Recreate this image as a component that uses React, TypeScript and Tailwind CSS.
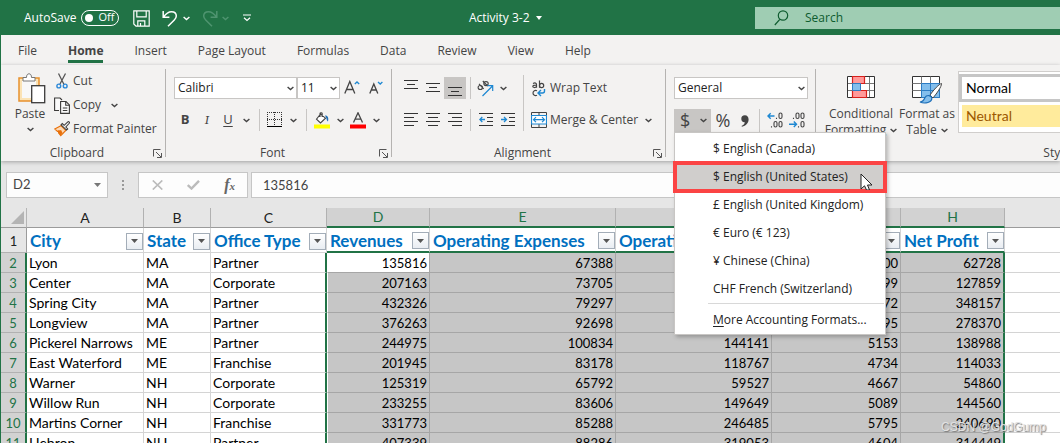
import React, { useState } from 'react';

interface IconProps {
  className?: string;
}

interface Column {
  letter: string;
  title: string;
  width: string;
}

interface Office {
  city: string;
  state: string;
  type: string;
  figures: number[];
}

const tabs = ['File', 'Home', 'Insert', 'Page Layout', 'Formulas', 'Data', 'Review', 'View', 'Help'];

const accountingFormats = [
  '$ English (Canada)',
  '$ English (United States)',
  '£ English (United Kingdom)',
  '€ Euro (€ 123)',
  '¥ Chinese (China)',
  'CHF French (Switzerland)'
];

const columns: Column[] = [
  { letter: 'A', title: 'City', width: 'w-[117px]' },
  { letter: 'B', title: 'State', width: 'w-[67px]' },
  { letter: 'C', title: 'Office Type', width: 'w-[116px]' },
  { letter: 'D', title: 'Revenues', width: 'w-[103px]' },
  { letter: 'E', title: 'Operating Expenses', width: 'w-[186px]' },
  { letter: 'F', title: 'Operating Income', width: 'w-[156px]' },
  { letter: 'G', title: 'Interest', width: 'w-[129px]' },
  { letter: 'H', title: 'Net Profit', width: 'w-[104px]' }
];

const offices: Office[] = [
  { city: 'Lyon', state: 'MA', type: 'Partner', figures: [135816, 67388, 68428, 5700, 62728] },
  { city: 'Center', state: 'MA', type: 'Corporate', figures: [207163, 73705, 133458, 5599, 127859] },
  { city: 'Spring City', state: 'MA', type: 'Partner', figures: [432326, 79297, 353029, 4872, 348157] },
  { city: 'Longview', state: 'MA', type: 'Partner', figures: [376263, 92698, 283565, 5195, 278370] },
  { city: 'Pickerel Narrows', state: 'ME', type: 'Partner', figures: [244975, 100834, 144141, 5153, 138988] },
  { city: 'East Waterford', state: 'ME', type: 'Franchise', figures: [201945, 83178, 118767, 4734, 114033] },
  { city: 'Warner', state: 'NH', type: 'Corporate', figures: [125319, 65792, 59527, 4667, 54860] },
  { city: 'Willow Run', state: 'NH', type: 'Corporate', figures: [233255, 83606, 149649, 5089, 144560] },
  { city: 'Martins Corner', state: 'NH', type: 'Franchise', figures: [331773, 85288, 246485, 5795, 240690] },
  { city: 'Hebron', state: 'NH', type: 'Partner', figures: [407339, 88286, 319053, 4604, 314449] }
];

const Chevron: React.FC<IconProps> = ({ className = '' }) => (
  <svg className={className} width="7" height="5" viewBox="0 0 7 5" fill="none" stroke="currentColor" strokeWidth="1.4">
    <path d="M.6 1l2.9 2.6L6.4 1" />
  </svg>
);

const SaveIcon = () => (
  <svg width="17" height="17" viewBox="0 0 17 17" fill="none" stroke="currentColor" strokeWidth="1.2">
    <path d="M.8.8h15.4v15.4H3L.8 14zM3.8.8v6h9.4v-6M4.8 16.2v-5.4h7v5.4M7.5 13v3" />
  </svg>
);

const UndoIcon: React.FC<IconProps> = ({ className = '' }) => (
  <svg className={className} width="16" height="17" viewBox="0 0 16 17" fill="none" stroke="currentColor" strokeWidth="1.5">
    <path d="M1.2 1v6.2h6.2M1.5 7C4 3.5 6.5 1.7 9.5 1.7c3 0 4.8 1.8 4.8 4.4 0 1.6-.8 2.700-2 3.900L6 16.200" />
  </svg>
);

const PasteIcon = () => (
  <svg className="ml-1" width="28" height="31" viewBox="0 0 28 31" fill="none">
    <rect x="1" y="5" width="20" height="23" fill="#fbe3b5" stroke="#e8912d" strokeWidth="1.5" />
    <rect x="4" y="8" width="14" height="17" fill="#f8f8f8" />
    <path d="M5 8V4.500h3.500C8.500 2 9.500.8 11 .8s2.500 1.200 2.500 3.700H17V8z" fill="#fff" stroke="#777" />
    <rect x="13.700" y="12.700" width="13" height="17" fill="#fff" stroke="#3b3a39" strokeWidth="1.3" />
  </svg>
);

const CutIcon = () => (
  <svg width="16" height="16" viewBox="0 0 16 16" fill="none">
    <path d="M4.500.5l5.500 11M11.500.5L6 11" stroke="#555" strokeWidth="1.3" />
    <circle cx="4.800" cy="13" r="1.900" stroke="#2b88d8" strokeWidth="1.4" />
    <circle cx="11.200" cy="13" r="1.900" stroke="#2b88d8" strokeWidth="1.4" />
  </svg>
);

const CopyIcon = () => (
  <svg width="16" height="17" viewBox="0 0 16 17" fill="none" stroke="#3b3a39" strokeWidth="1.1">
    <path d="M5 13.500H.6V1H6l2 2M6.600 4.500h5.400l3.400 3.400v8.500H6.600z" fill="#fafafa" />
    <path d="M11.700 4.700v3.600h3.500M8.800 11h4.500M8.800 13.500h4.500" />
  </svg>
);

const PainterIcon = () => (
  <svg width="16" height="16" viewBox="0 0 17 16" fill="none">
    <path d="M7.300 4.500L.8 8l2.800 2.500 1.500-.5-.3 2 2.400 3 5.300-5.500z" fill="#fdd9b5" stroke="#e8700a" strokeWidth="1.2" />
    <path d="M3.500 10.500l4-1.500 1.500 3-2 3z" fill="#e8700a" />
    <path d="M7.500 3.500l5.800 5.700 1.300-1.300-2-2 3.600-4c.7-1-.6-2.200-1.500-1.400l-3.900 3.600-2-1.900z" fill="#f5f5f5" stroke="#3b3a39" strokeWidth="1.1" />
  </svg>
);

const LauncherIcon = () => (
  <svg width="9" height="9" viewBox="0 0 9 9" fill="none" stroke="#555">
    <path d="M.5 7.500v-7h7M3 3l5 5M8.500 4v4.500H4" />
  </svg>
);

const BordersIcon = () => (
  <svg width="16" height="16" viewBox="0 0 16 16" fill="none" stroke="#333" shapeRendering="crispEdges">
    <path d="M0 .5h15M0 7.500h15M.5 0v13M7.500 0v13M14.500 0v13" strokeDasharray="1 1" />
    <path d="M0 14.500h15" strokeWidth="1" stroke="#000" />
  </svg>
);

const FillIcon = () => (
  <svg width="16" height="17" viewBox="0 0 16 17" fill="none">
    <path d="M6.500 2L2.500 7.200l4 3.800 5-4.800zM6 5V1.500C6 .6 8.200.6 8.200 1.500V5" fill="#fff" stroke="#444" strokeWidth="1.1" />
    <path d="M11 3.500c2.500 0 4 1.800 3 6-.8-.8-1.500-1.500-1.500-3z" fill="#1e6fb8" />
    <path d="M0 12.500h16v4H0z" fill="#ff0" />
  </svg>
);

const FontColorIcon = () => (
  <svg width="16" height="17" viewBox="0 0 16 17" fill="none">
    <path d="M3.500 10.500L8 .8l4.500 9.700M5 7.200h6" stroke="#444" strokeWidth="1.3" />
    <path d="M0 12.500h16v4H0z" fill="#f00" />
  </svg>
);

// Each line is [start, end] on a 14px wide icon
const LinesIcon: React.FC<{ lines: number[][]; top?: number }> = ({ lines, top = 1 }) => (
  <svg width="14" height="20" viewBox="0 0 14 20" stroke="#333" shapeRendering="crispEdges">
    {lines.map(([from, to], i) => (
      <path key={i} d={`M${from} ${top + i * 4 + 0.5}H${to}`} />
    ))}
  </svg>
);

const IndentIcon: React.FC<{ flip?: boolean }> = ({ flip = false }) => (
  <svg width="14" height="14" viewBox="0 0 14 14" fill="none">
    <path d="M0 .5h14M8 4.500h6M8 8.500h6M0 12.500h14" stroke="#333" shapeRendering="crispEdges" />
    <path d={flip ? 'M0 6.500h5.500M3 4l2.500 2.500L3 9' : 'M6 6.500H.8M3.300 4L.8 6.500 3.300 9'} stroke="#1e88d2" strokeWidth="1.3" />
  </svg>
);

const OrientationIcon = () => (
  <svg width="17" height="17" viewBox="0 0 17 17" fill="none">
    <g stroke="#444" strokeWidth="1.1">
      <ellipse cx="3.300" cy="7.500" rx="2.200" ry="2" />
      <path d="M2 3.800l4.700 5M5.800 1l5 5.200" />
      <ellipse cx="9" cy="3.600" rx="2.200" ry="2" />
    </g>
    <path d="M5.500 16L15.500 6M10.500 5.700h5.200V11" stroke="#1e88d2" strokeWidth="1.2" />
  </svg>
);

const WrapIcon = () => (
  <svg width="16" height="17" viewBox="0 0 16 17" fill="none">
    <g stroke="#444" strokeWidth="1.2">
      <path d="M2 3.500c2-1 3.500-.5 3.500 1v3.300M5.500 5c-2.500 0-3.700.5-3.700 1.600S4.500 8 5.500 6.500M8.500.5v7.300" />
      <circle cx="10.600" cy="5.500" r="2.100" />
      <path d="M6 10.800c-1.800-1-4 0-4 2.200s2.200 3.200 4 2.200" />
    </g>
    <path d="M13.500 9v2c0 1.500-.8 2-2 2H7.500M10 10l-3 3 3 3" stroke="#1e88d2" strokeWidth="1.4" />
  </svg>
);

const MergeIcon = () => (
  <svg width="16" height="16" viewBox="0 0 16 16" fill="none">
    <path d="M.5.5h15v15H.5zM8 .5v3M8 12v3.500" stroke="#444" />
    <path d="M.5 3.500h15v8.500H.5z" fill="#fff" stroke="#1e88d2" strokeWidth="1.2" />
    <path d="M2.500 7.700h11M5 5.200L2.500 7.700 5 10.200M11 5.200l2.500 2.500-2.500 2.500" stroke="#1e88d2" strokeWidth="1.2" />
  </svg>
);

const DecimalIcon: React.FC<{ increase?: boolean }> = ({ increase = false }) => (
  <svg width="17" height="17" viewBox="0 0 17 17" fill="none">
    <g stroke="#444" strokeWidth="1.1">
      <rect x="12" y="1" width="3" height="5.500" rx="1.500" />
      <rect x="12" y="9.500" width="3" height="5.500" rx="1.500" />
      <rect x="7" y={increase ? 9.5 : 1} width="3" height="5.500" rx="1.500" />
      <path d={increase ? 'M4.500 15.500v-1.300M9.500 7V5.700' : 'M4.500 7V5.700M9.500 15.500v-1.300'} />
    </g>
    <path
      d={increase ? 'M7.500 4H1M3.700 1.300L1 4l2.700 2.700' : 'M0 12.300h7.500M4.800 9.600l2.700 2.700L4.800 15'}
      stroke="#1e88d2"
      strokeWidth="1.4"
    />
  </svg>
);

const ConditionalIcon = () => (
  <svg width="28" height="22" viewBox="0 0 28 22" fill="none">
    <path d="M.5.5h27v21H.5z" fill="#fff" />
    <path d="M.5 7.500h27M.5 14.500h27M5.500.5v21M17.500.5v21M22.500.5v21" stroke="#777" />
    <path d="M.5.5h27v21H.5z" stroke="#333" />
    <path d="M5.500.5h12v7h-12z" fill="#ff9a9a" stroke="#d8201c" strokeWidth="1.2" />
    <path d="M5.500 14.500h14v7h-14z" fill="#ff9a9a" stroke="#d8201c" strokeWidth="1.2" />
    <path d="M5.500 7.500h8v7h-8z" fill="#83beec" stroke="#2b7cc4" />
    <path d="M14 8h8v6h-8z" fill="#fff" />
  </svg>
);

const FormatTableIcon = () => (
  <svg width="31" height="28" viewBox="0 0 31 28" fill="none">
    <path d="M.5.5h27v21H.5z" fill="#fff" stroke="#333" />
    <path d="M9.500 7.500h18v14h-18z" fill="#83beec" />
    <path d="M.5 7.500h9M.5 14.500h9M9.500.5v7M18.500.5v7" stroke="#777" />
    <path d="M9.500 7.500h18v14h-18zM9.500 14.500h18M18.500 7.500v14" stroke="#2b7cc4" />
    <path d="M29.500 7.500c-2.500.5-7.500 6-11.500 11.500l3 3c4-5 8.500-11 8.500-14.500z" fill="#fff" stroke="#444" />
    <path d="M8 26c3 0 4-2 5-4.500 1.500-3 6.500-2.500 6.800.8.2 4-6.800 6-11.800 3.700z" fill="#83beec" stroke="#1e6fb8" strokeWidth="1.2" />
  </svg>
);

const FilterButton: React.FC<{ column: string }> = ({ column }) => (
  <button
    type="button"
    aria-label={`Filter ${column}`}
    className="flex h-[17px] w-[17px] flex-none items-center justify-center border border-[#a3adb8] bg-gradient-to-b from-white to-[#e9edf2]"
  >
    <svg width="7" height="4" viewBox="0 0 7 4" fill="#555">
      <path d="M0 0h7L3.500 4z" />
    </svg>
  </button>
);

const Separator: React.FC<IconProps> = ({ className = 'bg-[#c8c6c4]' }) => (
  <div className={`w-px flex-none self-stretch ${className}`} />
);

const ToolButton: React.FC<{ label: string; className?: string; children: React.ReactNode }> = ({
  label,
  className = 'w-5',
  children
}) => (
  <button type="button" aria-label={label} className={`flex h-[22px] flex-none items-center justify-center ${className}`}>
    {children}
  </button>
);

const RibbonSelect: React.FC<{ label: string; value: string; className: string }> = ({ label, value, className }) => (
  <div className={`relative h-[22px] flex-none ${className}`}>
    <select
      aria-label={label}
      defaultValue={value}
      className="h-full w-full appearance-none border border-[#c8c6c4] bg-white pl-[3px] text-[12px] text-[#222]"
    >
      <option>{value}</option>
    </select>
    <Chevron className="pointer-events-none absolute top-[9px] right-[3px]" />
  </div>
);

interface RibbonGroupProps {
  title: string;
  className: string;
  launcher?: boolean;
  children: React.ReactNode;
}

const RibbonGroup: React.FC<RibbonGroupProps> = ({ title, className, launcher = true, children }) => (
  <section className={`flex flex-none flex-col ${className}`}>
    <div className="h-20 flex-none">{children}</div>
    <div className="flex h-4 items-center pr-[3px]">
      <span className="flex-1 text-center">{title}</span>
      {launcher && (
        <button type="button" aria-label={`${title} settings`}>
          <LauncherIcon />
        </button>
      )}
    </div>
  </section>
);

const TitleBar = () => {
  const [autoSave, setAutoSave] = useState(false);

  return (
    <header className="flex h-[35px] flex-none items-center bg-[#217346] pl-[23px] text-white">
      <span>AutoSave</span>
      <button
        type="button"
        role="switch"
        aria-checked={autoSave}
        aria-label="AutoSave"
        onClick={() => setAutoSave(!autoSave)}
        className="ml-[5px] flex h-4 w-[38px] flex-none items-center justify-between rounded-full border border-white pr-1 pl-[3px] text-[11px]"
      >
        <span className="h-2 w-2 rounded-full bg-white" />
        {autoSave ? 'On' : 'Off'}
      </button>
      <div className="flex flex-none items-center pt-px pl-[14px]">
        <button type="button" aria-label="Save"><SaveIcon /></button>
        <button type="button" aria-label="Undo" className="ml-3"><UndoIcon /></button>
        <button type="button" aria-label="Undo history" className="ml-[5px]"><Chevron /></button>
        <button type="button" aria-label="Redo" className="ml-3 text-[#4f9470]"><UndoIcon className="-scale-x-100" /></button>
        <button type="button" aria-label="Redo history" className="ml-1 text-[#4f9470]"><Chevron /></button>
        <button type="button" aria-label="Customize toolbar" className="ml-[14px]">
          <svg width="8" height="8" viewBox="0 0 8 8" fill="none" stroke="currentColor" strokeWidth="1.2">
            <path d="M0 1h8M1 3.800l3 2.700 3-2.700" />
          </svg>
        </button>
      </div>
      <div className="flex flex-1 justify-center pl-1">
        <button type="button" className="flex items-center gap-[6px] whitespace-nowrap">
          Activity 3-2
          <svg width="6" height="4" viewBox="0 0 6 4" fill="currentColor"><path d="M0 0h6L3 4z" /></svg>
        </button>
      </div>
      <label className="mt-[7px] flex h-[22px] w-[305px] flex-none items-center self-start bg-[#9fcdb3] pl-[19px] text-[#0e5c2f]">
        <svg width="15" height="16" viewBox="0 0 15 16" fill="none" stroke="currentColor" strokeWidth="1.2">
          <circle cx="9" cy="5.500" r="4.700" />
          <path d="M5.800 9.300L.8 15" />
        </svg>
        <input
          type="text"
          aria-label="Search"
          placeholder="Search"
          className="ml-4 min-w-0 flex-1 bg-transparent text-[12px] outline-none placeholder:text-[#0e5c2f]"
        />
      </label>
    </header>
  );
};

const AccountingMenu = () => {
  const [active, setActive] = useState('$ English (United States)');

  return (
    <div
      role="menu"
      className="absolute top-[23px] left-0 z-20 h-[203px] w-[212px] border border-[#c8c6c4] bg-white pt-[2px] text-[12px] text-[#222] shadow-[2px_2px_4px_rgba(0,0,0,0.25)]"
    >
      {accountingFormats.map(format => (
        <button
          key={format}
          type="button"
          role="menuitem"
          onClick={() => setActive(format)}
          className={`flex h-7 w-full items-center pl-[38px] whitespace-nowrap ${
            format === active ? 'relative z-10 bg-[#d0cecc] outline-4 -outline-offset-2 outline-[#fb4444]' : ''
          }`}
        >
          {format}
          {format === active && (
            <svg className="absolute top-[10px] right-3" width="13" height="17" viewBox="0 0 13 17">
              <path d="M1 1v15l3.500-3.200L6.500 17h3l-2-5H12z" fill="#fff" stroke="#222" />
            </svg>
          )}
        </button>
      ))}
      <div className="mr-px ml-[33px] border-t border-[#d8d8d8]" />
      <button type="button" role="menuitem" className="flex h-[31px] w-full items-center pl-[38px] whitespace-nowrap">
        <span className="underline underline-offset-2">M</span>ore Accounting Formats...
      </button>
    </div>
  );
};

const Ribbon = () => (
  <div className="relative z-10 flex h-24 flex-none bg-[#f3f2f1] text-[#444] shadow-[0_1px_4px_rgba(0,0,0,0.3)]">
    <RibbonGroup title="Clipboard" className="w-[164px]">
      <div className="flex pt-1">
        <button type="button" className="flex w-[53px] flex-none flex-col items-center pt-1 pl-[5px]">
          <PasteIcon />
          <span className="mt-[2px] leading-4">Paste</span>
          <Chevron className="mt-[5px]" />
        </button>
        <div className="flex flex-col items-start">
          <button type="button" className="flex h-6 items-center gap-[3px]"><CutIcon />Cut</button>
          <div className="flex h-6 items-center">
            <button type="button" className="flex items-center gap-[3px]"><CopyIcon />Copy</button>
            <button type="button" aria-label="Copy options" className="ml-[10px]"><Chevron /></button>
          </div>
          <button type="button" className="flex h-6 items-center gap-[3px] whitespace-nowrap"><PainterIcon />Format Painter</button>
        </div>
      </div>
    </RibbonGroup>
    <Separator className="my-1 bg-[#b5b3b1]" />

    <RibbonGroup title="Font" className="w-[225px]">
      <div className="flex flex-col gap-[10px] pt-3 pl-2">
        <div className="flex items-center">
          <RibbonSelect label="Font name" value="Calibri" className="w-[123px]" />
          <RibbonSelect label="Font size" value="11" className="w-[43px]" />
          <ToolButton label="Increase font size" className="w-6">
            <svg width="16" height="16" viewBox="0 0 16 16" fill="none">
              <path d="M.8 13.500L5.800 1.500l5 12M2.400 9.500h6.800" stroke="#444" strokeWidth="1.3" />
              <path d="M10.800 4l2.200-2 2.200 2" stroke="#1e88d2" strokeWidth="1.3" />
            </svg>
          </ToolButton>
          <ToolButton label="Decrease font size" className="w-6">
            <svg width="14" height="16" viewBox="0 0 14 16" fill="none">
              <path d="M.8 13.500l4-9.500 4 9.500M2.200 10h5.200" stroke="#444" strokeWidth="1.3" />
              <path d="M9 2l2.200 2 2.200-2" stroke="#1e88d2" strokeWidth="1.3" />
            </svg>
          </ToolButton>
        </div>
        <div className="flex items-center text-[13px]">
          <ToolButton label="Bold" className="w-[22px] font-bold">B</ToolButton>
          <ToolButton label="Italic" className="w-[22px] font-serif italic">I</ToolButton>
          <ToolButton label="Underline" className="w-5 underline underline-offset-2">U</ToolButton>
          <ToolButton label="Underline options" className="w-4"><Chevron /></ToolButton>
          <Separator className="mx-[5px] bg-[#c8c6c4]" />
          <ToolButton label="Borders"><BordersIcon /></ToolButton>
          <ToolButton label="Border options" className="w-4"><Chevron /></ToolButton>
          <Separator className="mx-[5px] bg-[#c8c6c4]" />
          <ToolButton label="Fill color"><FillIcon /></ToolButton>
          <ToolButton label="Fill color options" className="w-4"><Chevron /></ToolButton>
          <ToolButton label="Font color"><FontColorIcon /></ToolButton>
          <ToolButton label="Font color options" className="w-4"><Chevron /></ToolButton>
        </div>
      </div>
    </RibbonGroup>
    <Separator className="my-1 bg-[#b5b3b1]" />

    <RibbonGroup title="Alignment" className="w-[273px]">
      <div className="flex pt-[10px] pl-2">
        <div className="flex flex-none flex-col gap-[10px] pt-[2px]">
          <div className="flex items-center">
            <ToolButton label="Top align" className="w-[22px]"><LinesIcon top={2} lines={[[0, 14], [3, 11], [0, 14]]} /></ToolButton>
            <ToolButton label="Middle align" className="w-[22px]"><LinesIcon top={5} lines={[[0, 14], [3, 11], [0, 14]]} /></ToolButton>
            <ToolButton label="Bottom align" className="w-[22px] bg-[#c8c6c4]"><LinesIcon top={9} lines={[[0, 14], [3, 11], [0, 14]]} /></ToolButton>
            <Separator className="mx-1 bg-[#c8c6c4]" />
            <ToolButton label="Orientation"><OrientationIcon /></ToolButton>
            <ToolButton label="Orientation options" className="w-4"><Chevron /></ToolButton>
          </div>
          <div className="flex items-center">
            <ToolButton label="Align left" className="w-[22px]"><LinesIcon top={3} lines={[[0, 14], [0, 10], [0, 14], [0, 10]]} /></ToolButton>
            <ToolButton label="Center" className="w-[22px]"><LinesIcon top={3} lines={[[0, 14], [2, 12], [0, 14], [2, 12]]} /></ToolButton>
            <ToolButton label="Align right" className="w-[22px]"><LinesIcon top={3} lines={[[0, 14], [4, 14], [0, 14], [4, 14]]} /></ToolButton>
            <Separator className="mx-1 bg-[#c8c6c4]" />
            <ToolButton label="Decrease indent" className="w-[22px]"><IndentIcon /></ToolButton>
            <ToolButton label="Increase indent" className="w-[22px]"><IndentIcon flip /></ToolButton>
          </div>
        </div>
        <Separator className="ml-1 bg-[#c8c6c4]" />
        <div className="flex flex-col items-start gap-[10px] pt-[2px] pl-[7px]">
          <button type="button" className="flex h-[22px] items-center gap-[3px] whitespace-nowrap"><WrapIcon />Wrap Text</button>
          <div className="flex h-[22px] items-center">
            <button type="button" className="flex items-center gap-[3px] whitespace-nowrap"><MergeIcon />Merge &amp; Center</button>
            <button type="button" aria-label="Merge options" className="ml-[7px]"><Chevron /></button>
          </div>
        </div>
      </div>
    </RibbonGroup>
    <Separator className="my-1 bg-[#b5b3b1]" />

    <RibbonGroup title="Number" className="w-[149px]">
      <div className="flex flex-col gap-[10px] pt-3 pl-2">
        <RibbonSelect label="Number format" value="General" className="w-[134px]" />
        <div className="relative flex items-center">
          <button
            type="button"
            aria-label="Accounting number format"
            aria-haspopup="menu"
            className="flex h-[23px] w-[37px] flex-none items-center justify-between bg-[#c8c6c4] pr-1 pl-[6px] text-[18px]"
          >
            $<Chevron />
          </button>
          <ToolButton label="Percent style" className="w-6 text-[18px]">%</ToolButton>
          <ToolButton label="Comma style">
            <svg width="8" height="12" viewBox="0 0 8 12" fill="#444">
              <path d="M1 11.800L.5 11c2-.8 3-2 3.300-3.800C1.800 7.500.3 6 .3 4A3.600 3.600 0 013.900.3c2.300 0 3.700 1.800 3.700 4.200 0 3.500-2.600 6.300-6.600 7.300z" />
            </svg>
          </ToolButton>
          <Separator className="mx-1 bg-[#c8c6c4]" />
          <ToolButton label="Increase decimal" className="w-[22px]"><DecimalIcon increase /></ToolButton>
          <ToolButton label="Decrease decimal" className="w-[22px]"><DecimalIcon /></ToolButton>
          <AccountingMenu />
        </div>
      </div>
    </RibbonGroup>
    <Separator className="my-1 bg-[#b5b3b1]" />

    <RibbonGroup title="Styles" className="w-[490px]" launcher={false}>
      <div className="flex pl-[6px]">
        <button type="button" className="flex w-[78px] flex-none flex-col items-center pt-[11px] whitespace-nowrap">
          <ConditionalIcon />
          <span className="mt-2 leading-4">Conditional</span>
          <span className="flex items-center gap-1 leading-4">Formatting <Chevron /></span>
        </button>
        <button type="button" className="flex w-[54px] flex-none flex-col items-center pt-[11px] whitespace-nowrap">
          <FormatTableIcon />
          <span className="mt-[2px] leading-4">Format as</span>
          <span className="flex items-center gap-1 leading-4">Table <Chevron /></span>
        </button>
        <div className="mt-[6px] ml-1 flex h-[62px] w-[330px] flex-none flex-col gap-[3px] border border-[#d0cecc] bg-white pt-[2px] font-['Lato',sans-serif] text-[14px]">
          <button type="button" className="h-[28px] border-3 border-[#c6c6c6] pl-1 text-left leading-5 text-black">Normal</button>
          <button type="button" className="ml-[3px] h-[22px] bg-[#ffeb9c] pb-px pl-1 text-left leading-5 text-[#9c5700]">Neutral</button>
        </div>
      </div>
    </RibbonGroup>
  </div>
);

const FormulaBar = () => (
  <div className="flex h-[47px] flex-none items-start bg-[#e6e6e6] pt-[11px] pl-[5px] text-[#444]">
    <div className="flex h-[26px] w-[102px] flex-none items-center border border-[#c6c6c6] bg-[#fdfdfd] px-[6px]">
      <input aria-label="Name box" defaultValue="D2" className="w-full min-w-0 flex-1 bg-transparent font-['Lato',sans-serif] text-[13px] outline-none" />
      <button type="button" aria-label="Named ranges">
        <svg width="7" height="4" viewBox="0 0 7 4" fill="#777"><path d="M0 0h7L3.500 4z" /></svg>
      </button>
    </div>
    <svg className="mx-[14px] mt-2 flex-none" width="2" height="10" viewBox="0 0 2 10" fill="#999">
      <path d="M0 0h2v2H0zM0 4h2v2H0zM0 8h2v2H0z" />
    </svg>
    <div className="flex h-[26px] w-[110px] flex-none items-center justify-between border border-[#c6c6c6] bg-[#fdfdfd] pr-3 pl-[13px]">
      <button type="button" aria-label="Cancel">
        <svg width="11" height="10" viewBox="0 0 11 10" stroke="#bbb" strokeWidth="1.7"><path d="M.8.5l9.500 9M10.300.5L.8 9.500" /></svg>
      </button>
      <button type="button" aria-label="Enter">
        <svg width="13" height="10" viewBox="0 0 13 10" fill="none" stroke="#bbb" strokeWidth="2.4"><path d="M.8 5l3.700 3.500L12 .8" /></svg>
      </button>
      <button type="button" aria-label="Insert function" className="font-['Liberation_Serif',serif] text-[16px] leading-5 font-bold text-[#666] italic">
        f<span className="text-[11px]">x</span>
      </button>
    </div>
    <input
      aria-label="Formula bar"
      defaultValue="135816"
      className="ml-[3px] h-[26px] min-w-0 flex-1 border border-r-0 border-[#c6c6c6] bg-[#fdfdfd] pl-[11px] font-['Lato',sans-serif] text-[13px] outline-none"
    />
  </div>
);

const Sheet = () => (
  <div className="min-h-0 flex-1 overflow-hidden bg-white font-['Lato',sans-serif] text-black">
    <table className="w-full table-fixed border-separate border-spacing-0 text-[13px] leading-[18px]">
      <colgroup>
        <col className="w-[26px]" />
        {columns.map(col => <col key={col.letter} className={col.width} />)}
        <col />
      </colgroup>
      <thead>
        <tr className="h-5 bg-[#e6e6e6]">
          <th className="border-r border-b border-r-[#b5b5b5] border-b-[#9b9b9b] p-0">
            <svg className="ml-[10px]" width="13" height="13" viewBox="0 0 13 13" fill="#b4b4b4"><path d="M13 0v13H0z" /></svg>
          </th>
          {columns.map((col, i) => (
            <th
              key={col.letter}
              scope="col"
              className={`border-r border-r-[#b1b1b1] p-0 text-[14px] font-normal ${
                i >= 3 ? 'border-b-2 border-b-[#217346] bg-[#d2d2d2] text-[#217346]' : 'border-b border-b-[#9b9b9b] text-[#222]'
              }`}
            >
              {col.letter}
            </th>
          ))}
          <th className="border-b border-[#9b9b9b] p-0" />
        </tr>
      </thead>
      <tbody>
        <tr className="h-[25px]">
          <th scope="row" className="border-r border-b border-r-[#9b9b9b] border-b-[#b1b1b1] bg-[#e6e6e6] p-0 pt-px font-normal text-[#222]">1</th>
          {columns.map((col, i) => (
            <td
              key={col.letter}
              className={`border-r border-r-[#d4d4d4] py-0 pr-0 pl-[3px] ${
                i >= 3 ? 'border-b-2 border-b-[#217346]' : 'border-b border-b-[#d4d4d4]'
              }`}
            >
              <div className="flex h-[23px] items-center justify-between pt-[2px]">
                <span className="text-[17px] font-bold whitespace-nowrap text-[#0070c0]">{col.title}</span>
                <FilterButton column={col.title} />
              </div>
            </td>
          ))}
          <td className="border-b border-[#d4d4d4] p-0" />
        </tr>
        {offices.map((office, row) => (
          <tr key={office.city} className="h-5">
            <th scope="row" className="border-r-2 border-b border-r-[#217346] border-b-[#b1b1b1] bg-[#d2d2d2] p-0 pt-px font-normal text-[#217346]">
              {row + 2}
            </th>
            <td className="border-r border-b border-[#d4d4d4] p-0 pt-px pl-[2px] text-[14px] whitespace-nowrap">{office.city}</td>
            <td className="border-r border-b border-[#d4d4d4] p-0 pt-px pl-[2px] text-[14px]">{office.state}</td>
            <td className="border-r-2 border-b border-r-[#217346] border-b-[#d4d4d4] p-0 pt-px pl-[2px] text-[14px]">{office.type}</td>
            {office.figures.map((figure, i) => (
              <td
                key={i}
                className={`border-b border-b-[#a6a6a6] p-0 pt-px pr-[2px] text-right ${
                  i === 4 ? 'border-r-2 border-r-[#217346]' : 'border-r border-r-[#a6a6a6]'
                } ${i === 0 ? 'border-l border-l-white' : ''} ${row === 0 && i === 0 ? 'bg-white' : 'bg-[#c6c6c6]'}`}
              >
                {figure}
              </td>
            ))}
            <td className="border-b border-[#d4d4d4] p-0" />
          </tr>
        ))}
      </tbody>
    </table>
  </div>
);

const App: React.FC = () => {
  const [activeTab, setActiveTab] = useState('Home');

  return (
    <div className="relative flex h-screen flex-col overflow-hidden border-l border-[#217346] font-['Open_Sans',sans-serif] text-[12px]">
      <TitleBar />
      <nav className="flex h-[30px] flex-none items-end gap-[31px] bg-[#f3f2f1] pb-[2px] pl-[17px] text-[#444]">
        {tabs.map(tab => (
          <button
            key={tab}
            type="button"
            onClick={() => setActiveTab(tab)}
            className={`h-[22px] border-b-3 leading-4 whitespace-nowrap ${
              tab === activeTab ? 'border-[#217346] font-bold' : 'border-transparent'
            }`}
          >
            {tab}
          </button>
        ))}
      </nav>
      <Ribbon />
      <FormulaBar />
      <Sheet />
      <div className="absolute right-[14px] bottom-2 font-['Liberation_Sans',sans-serif] text-[12px] leading-4 text-[#e2e2e2] [text-shadow:1px_1px_1px_#777]">
        CSDN @GodGump
      </div>
    </div>
  );
};

export default App;
